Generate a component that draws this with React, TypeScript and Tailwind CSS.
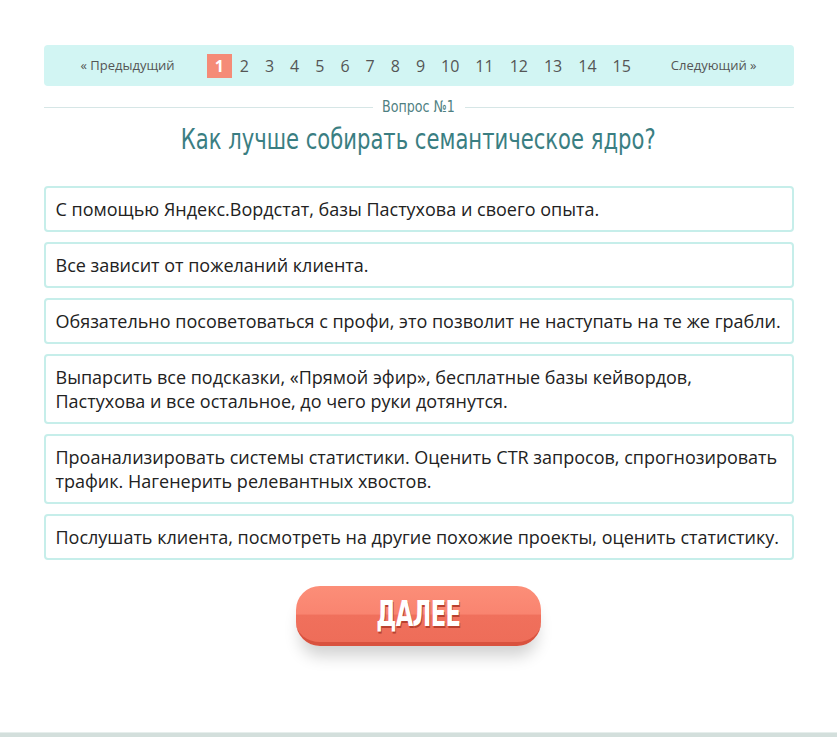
import { useState } from 'react'

const answers = [
    'С помощью Яндекс.Вордстат, базы Пастухова и своего опыта.',
    'Все зависит от пожеланий клиента.',
    'Обязательно посоветоваться с профи, это позволит не наступать на те же грабли.',
    'Выпарсить все подсказки, «Прямой эфир», бесплатные базы кейвордов, Пастухова и все остальное, до чего руки дотянутся.',
    'Проанализировать системы статистики. Оценить CTR запросов, спрогнозировать трафик. Нагенерить релевантных хвостов.',
    'Послушать клиента, посмотреть на другие похожие проекты, оценить статистику.',
]

const pages = Array.from({ length: 15 }, (_, i) => i + 1)

export default function App() {
    const [current, setCurrent] = useState(1)
    const [picked, setPicked] = useState<number | null>(null)

    return (
        <div className="min-h-[737px] bg-white flex flex-col font-['Open_Sans',sans-serif]">
            <main className="flex-1 w-[750px] mx-auto pt-[45px]">
                {/* Pagination */}
                <nav className="h-[41px] rounded-[4px] bg-[#d2f5f3] flex items-center justify-center text-[#555]">
                    <a className="text-[13px] mr-[32px] cursor-pointer">« Предыдущий</a>
                    {pages.map((p) => (
                        <button
                            key={p}
                            onClick={() => setCurrent(p)}
                            className={`h-[24px] px-[8px] text-[16px] leading-[24px] ${p === current ? 'bg-[#f58b77] text-white font-bold' : ''}`}
                        >
                            {p}
                        </button>
                    ))}
                    <a className="text-[13px] ml-[32px] cursor-pointer">Следующий »</a>
                </nav>

                {/* Question header */}
                <div className="mt-[9px] flex items-center">
                    <div className="flex-1 h-px bg-[#d6e6e6]" />
                    <div className="w-[92px] flex justify-center">
                        <span className="inline-block whitespace-nowrap text-[16px] leading-[24px] text-[#4f7f82] font-['DejaVu_Sans_Condensed',sans-serif] scale-x-[0.88]">
                            Вопрос №1
                        </span>
                    </div>
                    <div className="flex-1 h-px bg-[#d6e6e6]" />
                </div>
                <div className="mt-[2px] flex justify-center">
                    <h1 className="whitespace-nowrap text-[29px] leading-[36px] text-[#3a7e82] font-['DejaVu_Sans_Condensed',sans-serif] scale-x-[0.81]">
                        Как лучше собирать семантическое ядро?
                    </h1>
                </div>

                {/* Answers */}
                <div className="mt-[29px] flex flex-col gap-[10px]">
                    {answers.map((a, i) => (
                        <div
                            key={i}
                            onClick={() => setPicked(i)}
                            className={`border-2 rounded-[4px] px-[10px] py-[9px] text-[18px] leading-[24px] text-[#222] cursor-pointer ${picked === i ? 'border-[#8fd9d2]' : 'border-[#c6eeea]'}`}
                        >
                            {a}
                        </div>
                    ))}
                </div>

                {/* Next button */}
                <div className="mt-[26px] flex justify-center">
                    <button className="w-[245px] h-[60px] rounded-[24px] border-b-[4px] border-[#d9523f] bg-[linear-gradient(#fc8e78_0%,#f98470_50%,#f0705c_52%,#ee6d59_100%)] shadow-[0_14px_16px_-4px_rgba(0,0,0,0.18)] flex items-center justify-center">
                        <span className="inline-block text-white font-bold text-[35px] leading-[40px] tracking-[-1px] font-['DejaVu_Sans_Condensed',sans-serif] scale-x-[0.72] [text-shadow:1px_2px_0_#b9412f]">
                            ДАЛЕЕ
                        </span>
                    </button>
                </div>
            </main>

            <footer className="h-[5px] bg-[#d3dfdc] border-t border-[#e6eeec]" />
        </div>
    )
}
